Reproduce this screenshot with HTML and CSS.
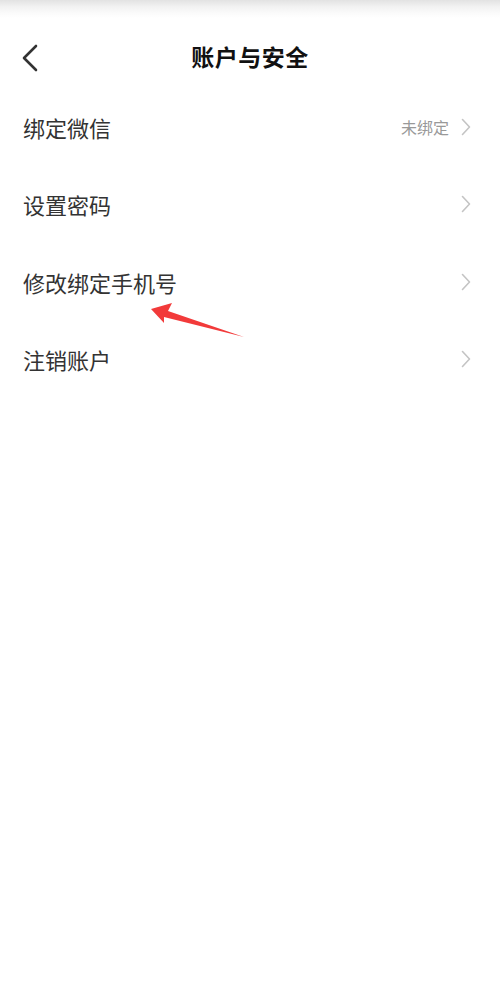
FILE: index.html
```html
<!DOCTYPE html>
<html lang="zh">
<head>
<meta charset="utf-8">
<link rel="stylesheet" href="styles.css">
</head>
<body>
<div class="page">
  <div class="topshade"></div>
  <header class="header">
    <svg class="back" width="18" height="28" viewBox="0 0 18 28"><path d="M15 2 L3 14 L15 26" fill="none" stroke="#333" stroke-width="2.6" stroke-linecap="round" stroke-linejoin="round"/></svg>
    <h1 class="title">账户与安全</h1>
  </header>
  <ul class="list">
    <li class="row"><span class="label">绑定微信</span><span class="right"><span class="value">未绑定</span><svg class="chev" width="10" height="18" viewBox="0 0 10 18"><path d="M1.5 1.5 L8.5 9 L1.5 16.5" fill="none" stroke="#c4c4c4" stroke-width="1.6" stroke-linecap="round" stroke-linejoin="round"/></svg></span></li>
    <li class="row"><span class="label">设置密码</span><span class="right"><svg class="chev" width="10" height="18" viewBox="0 0 10 18"><path d="M1.5 1.5 L8.5 9 L1.5 16.5" fill="none" stroke="#c4c4c4" stroke-width="1.6" stroke-linecap="round" stroke-linejoin="round"/></svg></span></li>
    <li class="row"><span class="label">修改绑定手机号</span><span class="right"><svg class="chev" width="10" height="18" viewBox="0 0 10 18"><path d="M1.5 1.5 L8.5 9 L1.5 16.5" fill="none" stroke="#c4c4c4" stroke-width="1.6" stroke-linecap="round" stroke-linejoin="round"/></svg></span></li>
    <li class="row"><span class="label">注销账户</span><span class="right"><svg class="chev" width="10" height="18" viewBox="0 0 10 18"><path d="M1.5 1.5 L8.5 9 L1.5 16.5" fill="none" stroke="#c4c4c4" stroke-width="1.6" stroke-linecap="round" stroke-linejoin="round"/></svg></span></li>
  </ul>
  <svg class="arrow" width="500" height="1000" viewBox="0 0 500 1000"><polygon points="151,309 172,303 168,311 244,337 164,317 164,323" fill="#f23a3a"/></svg>
</div>
</body>
</html>
```
FILE: styles.css
```css
html, body {
  margin: 0;
  padding: 0;
  background: #fff;
}
body {
  font-family: "Noto Sans CJK SC", "Noto Sans", sans-serif;
  color: #333;
}
.page {
  position: relative;
  width: 500px;
  height: 1000px;
  overflow: hidden;
  background: #fff;
}
.topshade {
  height: 18px;
  background: linear-gradient(to bottom, #e2e2e2 0%, #f1f1f1 35%, #fafafa 70%, #ffffff 100%);
}
.header {
  position: relative;
  height: 64px;
  padding-top: 10px;
  display: flex;
  align-items: center;
  justify-content: center;
  margin-top: -4px;
}
.back {
  position: absolute;
  left: 21px;
  top: 30px;
}
.title {
  margin: 0;
  font-size: 23px;
  font-weight: 700;
  color: #111;
  letter-spacing: 0.5px;
  line-height: 1;
}
.list {
  list-style: none;
  margin: 0;
  padding: 0;
}
.row {
  height: 77.5px;
  display: flex;
  align-items: center;
  justify-content: space-between;
  padding: 0 29px 0 23px;
}
.label {
  font-size: 22px;
  color: #333;
  line-height: 1;
}
.right {
  display: flex;
  align-items: center;
  gap: 12px;
}
.value {
  font-size: 16px;
  color: #999;
  line-height: 1;
}
.chev {
  display: block;
}
.arrow {
  position: absolute;
  left: 0;
  top: 0;
  pointer-events: none;
}
```
